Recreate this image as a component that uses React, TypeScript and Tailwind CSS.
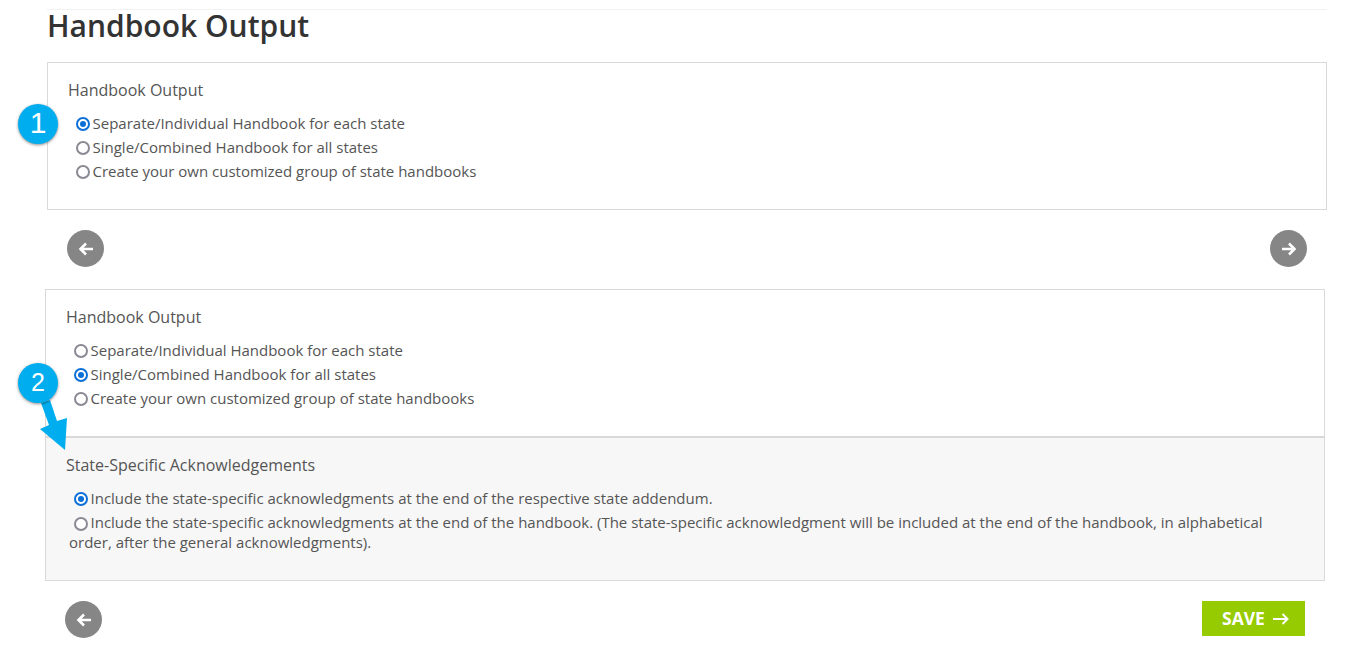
import React from 'react';

const RADIO_BLUE = '#0b6fd8';

function Radio({ checked, label }: { checked?: boolean; label: string }) {
  return (
    <div className="flex h-6 items-center">
      <span
        className={`mr-[2.5px] flex h-[14px] w-[14px] shrink-0 items-center justify-center rounded-full border-2 bg-white ${
          checked ? 'border-[#0b6fd8]' : 'border-[#8a8a94]'
        }`}
      >
        {checked && <span className="h-[6px] w-[6px] rounded-full" style={{ background: RADIO_BLUE }} />}
      </span>
      <span className="pb-[2px]">{label}</span>
    </div>
  );
}

function Badge({ n, className }: { n: number; className: string }) {
  return (
    <div
      className={`absolute flex h-10 w-10 items-center justify-center rounded-full bg-[#00aeef] text-white shadow-[0_1px_3px_rgba(0,0,0,0.45)] font-['Liberation_Sans',sans-serif] ${className}`}
    >
      {n}
    </div>
  );
}

function RoundArrow({ dir }: { dir: 'left' | 'right' }) {
  return (
    <div className="flex h-[37px] w-[37px] items-center justify-center rounded-full bg-[#868686]">
      <svg width="16" height="14" viewBox="0 0 16 14" fill="none" stroke="#fff" strokeWidth="2.6">
        {dir === 'left' ? <path d="M15 7H3M8 1.500 2.500 7 8 12.500" /> : <path d="M1 7h12M8 1.500 13.500 7 8 12.500" />}
      </svg>
    </div>
  );
}

export default function App() {
  return (
    <div className="relative h-[652px] w-[1347px] overflow-hidden bg-white font-['Open_Sans',sans-serif] text-[15px] text-[#555]">
      <div className="ml-[47px] w-[1280px] pt-[9px]">
        <div className="border-t border-[#f2f2f2]" />
        <h1 className="text-[30px] leading-[32px] font-semibold text-[#333]">Handbook Output</h1>
      </div>

      {/* Step 1 */}
      <div className="ml-[47px] mt-[20px] h-[148px] w-[1280px] border border-[#d9d9d9] pl-[20px] pt-[16px]">
        <div className="text-base leading-[22px]">Handbook Output</div>
        <div className="mt-[11px] ml-[8px]">
          <Radio checked label="Separate/Individual Handbook for each state" />
          <Radio label="Single/Combined Handbook for all states" />
          <Radio label="Create your own customized group of state handbooks" />
        </div>
      </div>
      <div className="ml-[67px] mt-[20px] flex w-[1240px] justify-between">
        <RoundArrow dir="left" />
        <RoundArrow dir="right" />
      </div>

      {/* Step 2 */}
      <div className="ml-[45px] mt-[22px] w-[1280px] border border-[#d9d9d9]">
        <div className="h-[146px] pl-[20px] pt-[16px]">
          <div className="text-base leading-[22px]">Handbook Output</div>
          <div className="mt-[11px] ml-[8px]">
            <Radio label="Separate/Individual Handbook for each state" />
            <Radio checked label="Single/Combined Handbook for all states" />
            <Radio label="Create your own customized group of state handbooks" />
          </div>
        </div>
        <div className="h-[144px] border-t-2 border-[#d9d9d9] bg-[#f7f7f7] pl-[20px] pr-[40px] pt-[16px]">
          <div className="text-base leading-[22px]">State-Specific Acknowledgements</div>
          <div className="mt-[11px] leading-[20px]">
            <div className="ml-[8px]">
              <Radio checked label="Include the state-specific acknowledgments at the end of the respective state addendum." />
            </div>
            <p className="pl-[3px] pt-[1px] indent-[5px]">
              <span className="mr-[2.5px] inline-block h-[14px] w-[14px] rounded-full border-2 border-[#8a8a94] bg-white align-[-3px]" />
              Include the state-specific acknowledgments at the end of the handbook. (The state-specific acknowledgment will be included at the end of the handbook, in alphabetical order, after the general acknowledgments).
            </p>
          </div>
        </div>
      </div>
      <div className="ml-[65px] mt-[20px] flex w-[1240px] items-start justify-between">
        <RoundArrow dir="left" />
        <button className="flex h-[35px] w-[103px] items-center justify-start gap-[8px] bg-[#95cb00] pl-[20px] text-[17.5px] font-bold text-white">
          SAVE
          <svg width="16" height="12" viewBox="0 0 16 12" fill="none" stroke="#fff" strokeWidth="2">
            <path d="M0 6h14.500M9.500 1l5 5-5 5" />
          </svg>
        </button>
      </div>

      {/* Annotations */}
      <Badge n={1} className="left-[18px] top-[104px] pb-[3px] text-[30px]" />
      <svg className="absolute left-[36px] top-[398px]" width="34" height="54" viewBox="0 0 34 54" fill="#00aeef">
        <path d="M5 5 14 2l7 21 10-3-2 32L4 31l9-4z" />
      </svg>
      <Badge n={2} className="left-[18px] top-[363px] pb-[1px] text-[25px]" />
    </div>
  );
}
